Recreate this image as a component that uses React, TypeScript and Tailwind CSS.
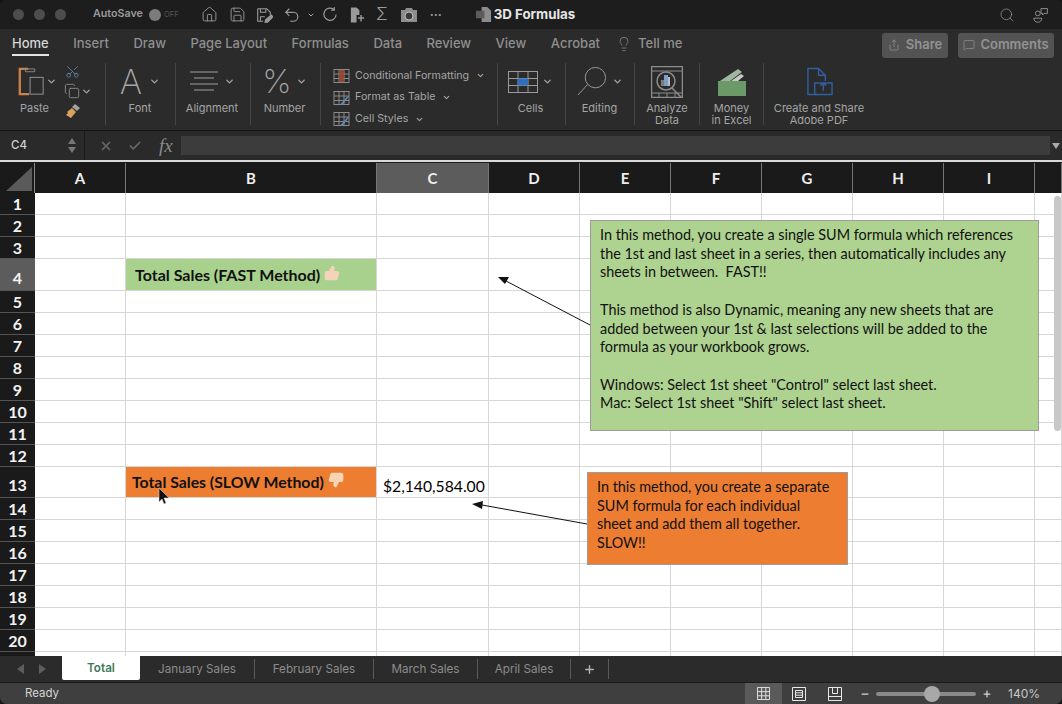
import { ThumbsUp, ThumbsDown, Home, Save, Search, Lightbulb, Plus, Minus, Share, MessageSquare, Check, X, ChevronDown, Scissors, Copy } from "lucide-react";

const ui = "font-['Inter',sans-serif]";
const sheet = "font-['Lato',sans-serif]";

const columns = ["A", "B", "C", "D", "E", "F", "G", "H", "I", ""];
const rows = Array.from({ length: 20 }, (_, i) => i + 1);
const tabs = [
  { name: "January Sales", w: "w-[115px]" },
  { name: "February Sales", w: "w-[119px]" },
  { name: "March Sales", w: "w-[104px]" },
  { name: "April Sales", w: "w-[93px]" },
];

function Chev({ className = "" }: { className?: string }) {
  return <ChevronDown className={`h-[11px] w-[11px] text-[#a5a5a5] ${className}`} strokeWidth={3} />;
}

function Sep() {
  return <div className="mb-[5px] mt-[2px] w-px shrink-0 bg-[#454545]" />;
}

function Group({ w, label, children }: { w: string; label: string; children?: React.ReactNode }) {
  return (
    <div className={`${w} flex shrink-0 flex-col items-center`}>
      <div className="flex h-[41px] items-center justify-center gap-[4px]">{children}</div>
      <div className="whitespace-pre-line text-center text-[11px] leading-[12px] text-[#a5a5a5]">{label}</div>
    </div>
  );
}

function TitleBar() {
  return (
    <div className={`flex h-[29px] items-center bg-[#1d1d1d] text-[#9a9a9a] ${ui}`}>
      <div className="ml-[13px] flex gap-[10px]">
        <div className="h-[11px] w-[11px] rounded-full bg-[#4d4d4d]" />
        <div className="h-[11px] w-[11px] rounded-full bg-[#4d4d4d]" />
        <div className="h-[11px] w-[11px] rounded-full bg-[#4d4d4d]" />
      </div>
      <span className="ml-[27px] w-[49px] whitespace-nowrap text-[10.700px] font-semibold">AutoSave</span>
      <div className="ml-[7px] h-[12px] w-[12px] rounded-full bg-[#7c7c7c]" />
      <span className="ml-[3px] w-[14px] text-[7.500px] text-[#555]">OFF</span>
      <Home className="ml-[23px] h-[17px] w-[17px]" strokeWidth={1.3} />
      <Save className="ml-[11px] h-[17px] w-[17px]" strokeWidth={1.3} />
      <svg viewBox="0 0 20 20" className="ml-[9px] h-[18px] w-[18px]" fill="none" stroke="currentColor" strokeWidth="1.2">
        <path d="M3 3h10l4 4v3M3 3v14h6M6 3v4h6V3M6 17v-5h5" />
        <path d="M11 18l1-3 6-5 2 2-6 6z" fill="currentColor" />
      </svg>
      <svg viewBox="0 0 18 18" className="ml-[11px] h-[18px] w-[16px]" fill="none" stroke="currentColor" strokeWidth="1.3">
        <path d="M6 2L2 6l4 4M2 6h8a5 5 0 0 1 1 10H7" />
      </svg>
      <Chev className="ml-[7px] !h-[8px] !w-[8px]" />
      <svg viewBox="0 0 18 18" className="ml-[7px] h-[17px] w-[17px]" fill="none" stroke="currentColor" strokeWidth="1.2">
        <path d="M15 9a6.500 6.500 0 1 1-2-5M13 1v3.500h-3.500" />
      </svg>
      <svg viewBox="0 0 18 18" className="ml-[10px] h-[18px] w-[17px]" fill="currentColor">
        <path d="M2 1h6l3 3v5H8v8H2z" />
        <path d="M12 9h1.500v2.500H16V13h-2.500v3H12v-3H9.500v-1.500H12z" />
      </svg>
      <span className="ml-[10px] text-[17px] font-light leading-none">Σ</span>
      <svg viewBox="0 0 18 16" className="ml-[12px] h-[16px] w-[18px]">
        <path d="M1 3h4l1-2h6l1 2h4v12H1z" fill="#8d8d8d" />
        <circle cx="9" cy="9" r="4" fill="#3a3a3a" stroke="#c0c0c0" />
      </svg>
      <span className="ml-[12px] w-[17px] text-[12px] font-bold leading-none">···</span>
      <svg viewBox="0 0 18 18" className="ml-[28px] h-[17px] w-[17px]">
        <path d="M7 1h6l4 4v12H7z" fill="#8c8c8c" />
        <rect x="1" y="5" width="9" height="8" fill="#5b5b5b" />
      </svg>
      <span className="ml-[2px] whitespace-nowrap text-[13.300px] font-bold text-[#e6e6e6]">3D Formulas</span>
      <Search className="ml-auto h-[16px] w-[16px]" strokeWidth={1.1} />
      <svg viewBox="0 0 20 20" className="ml-[18px] mr-[13px] h-[16px] w-[16px]" fill="none" stroke="currentColor" strokeWidth="1.1">
        <circle cx="6" cy="8" r="3" />
        <path d="M1 14h10c0 3-2 5-5 5s-5-2-5-5zM10 2h8v6h-4l-2 2V8h-2z" />
      </svg>
    </div>
  );
}

const ribbonTabs = ["Insert", "Draw", "Page Layout", "Formulas", "Data", "Review", "View", "Acrobat"];

function RibbonTabs() {
  return (
    <div className={`flex h-[29px] items-center bg-[#2b2b2b] pl-[12px] text-[13px] font-medium text-[#8f8f8f] ${ui}`}>
      <div className="relative text-[#d5d5d5]">
        Home
        <div className="absolute left-0 right-0 top-[20px] h-[2px] bg-[#e4e4e4]" />
      </div>
      {ribbonTabs.map((t) => (
        <span key={t} className="ml-[24.500px]">{t}</span>
      ))}
      <Lightbulb className="ml-[16px] h-[16px] w-[16px]" strokeWidth={1.1} />
      <span className="ml-[6px]">Tell me</span>
      <div className="ml-auto mt-[3px] flex h-[25px] w-[66px] items-center justify-center gap-[6px] rounded-[3px] bg-[#535353] font-semibold text-[#929292]">
        <Share className="h-[12px] w-[12px]" strokeWidth={1.4} />
        Share
      </div>
      <div className="ml-[10px] mr-[8px] mt-[3px] flex h-[25px] w-[96px] items-center justify-center gap-[5px] rounded-[3px] bg-[#535353] font-semibold text-[#929292]">
        <MessageSquare className="h-[12px] w-[12px]" strokeWidth={1.4} />
        Comments
      </div>
    </div>
  );
}

function StyleRow({ label, color }: { label: string; color: string }) {
  return (
    <div className="flex h-[22.500px] items-center gap-[5px] whitespace-nowrap text-[10.700px] text-[#a5a5a5]">
      <svg viewBox="0 0 16 16" className="h-[16px] w-[17px]" fill="none" stroke="#8a8a8a" strokeWidth="1">
        <rect x="0.500" y="1.500" width="15" height="13" />
        <path d="M0.500 6h15M0.500 10.500h15M5.500 1.500v13M10.500 1.500v13" />
        <path d={color === "#a0452d" ? "M6 2h4v12H6z" : "M7 14l7-8 1 1-6 8z"} fill={color} stroke="none" />
      </svg>
      {label}
      <Chev className="ml-[2px] !h-[9px] !w-[9px]" />
    </div>
  );
}

function Ribbon() {
  return (
    <div className={`flex h-[73px] border-b border-[#141414] bg-[#2b2b2b] pt-[3px] ${ui}`}>
      <div className="flex w-[105px] shrink-0 pl-[17px]">
        <div className="flex w-[42px] flex-col items-start">
          <div className="flex h-[41px] items-center gap-[1px]">
            <svg viewBox="0 0 30 34" className="h-[32px] w-[28px]" fill="none">
              <path d="M12 3H3v27h10" stroke="#c8824a" strokeWidth="2.500" />
              <path d="M9 3h10v3H9z" stroke="#8c8c8c" />
              <rect x="14" y="12" width="14" height="18" fill="#2b2b2b" stroke="#9a9a9a" />
            </svg>
            <Chev />
          </div>
          <div className="w-[35px] text-center text-[11px] leading-[12px] text-[#a5a5a5]">Paste</div>
        </div>
        <div className="flex flex-col items-start gap-[4px] pl-[5px] pt-[3px]">
          <Scissors className="ml-[1px] h-[15px] w-[15px] -rotate-90 text-[#6e8cb4]" strokeWidth={1.2} />
          <div className="flex items-center gap-[1px]">
            <Copy className="h-[16px] w-[16px] text-[#a0a0a0]" strokeWidth={1.1} />
            <Chev />
          </div>
          <svg viewBox="0 0 16 16" className="ml-[1px] h-[16px] w-[16px]">
            <path d="M10 1l5 4-3 3-5-4z" fill="#a0a0a0" />
            <path d="M7 5l4 4-5 6-5-3 2-2-1-1z" fill="#d9a15a" />
          </svg>
        </div>
      </div>
      <Sep />
      <Group w="w-[68px]" label="Font">
        <span className="text-[34px] font-extralight leading-none text-[#a5a5a5]">A</span>
        <Chev className="ml-[3px]" />
      </Group>
      <div className="w-px shrink-0" />
      <Sep />
      <Group w="w-[72px]" label="Alignment">
        <svg viewBox="0 0 28 24" className="h-[24px] w-[28px]" stroke="#a0a0a0" strokeWidth="1">
          <path d="M0 2h28M4 8h20M0 14h28M4 20h20" />
        </svg>
        <Chev className="ml-[2px]" />
      </Group>
      <div className="w-[2px] shrink-0" />
      <Sep />
      <Group w="w-[67px]" label="Number">
        <span className="text-[33px] font-extralight leading-none text-[#a5a5a5]">%</span>
        <Chev />
      </Group>
      <div className="w-[2px] shrink-0" />
      <Sep />
      <div className="flex w-[176px] shrink-0 flex-col pl-[12px] pt-[4px]">
        <StyleRow label="Conditional Formatting" color="#a0452d" />
        <StyleRow label="Format as Table" color="#5d86bd" />
        <StyleRow label="Cell Styles" color="#5d86bd" />
      </div>
      <Sep />
      <Group w="w-[65px]" label="Cells">
        <svg viewBox="0 0 30 26" className="h-[26px] w-[30px]" fill="none" stroke="#9a9a9a">
          <rect x="0.500" y="2.500" width="29" height="21" />
          <path d="M0.500 9.500h29M0.500 16.500h29M10 2.500v21M20 2.500v21" />
          <rect x="10" y="9.500" width="10" height="7" fill="#2e6fc0" stroke="none" />
        </svg>
        <Chev />
      </Group>
      <div className="w-[2px] shrink-0" />
      <Sep />
      <Group w="w-[67px]" label="Editing">
        <svg viewBox="0 0 32 32" className="h-[31px] w-[31px]" fill="none" stroke="#9a9a9a" strokeWidth="1">
          <circle cx="19" cy="12" r="10.500" />
          <path d="M11 19L1 30" />
        </svg>
        <Chev />
      </Group>
      <div className="w-px shrink-0" />
      <Sep />
      <Group w="w-[64px]" label={"Analyze\nData"}>
        <svg viewBox="0 0 32 32" className="h-[32px] w-[32px]" fill="none" stroke="#8d8d8d">
          <rect x="0.500" y="0.500" width="31" height="31" strokeWidth="1.500" />
          <path d="M0.500 5h31M0.500 27h31M8 27v4M16 27v4M24 27v4" />
          <circle cx="15" cy="15" r="9" strokeWidth="1.500" />
          <path d="M21 22l9 9" strokeWidth="1.500" />
          <rect x="10" y="14" width="3" height="6" fill="#7d7d7d" stroke="none" />
          <rect x="13" y="9" width="4" height="11" fill="#7d9dc9" stroke="none" />
          <rect x="17" y="11" width="2" height="9" fill="#bdbdbd" stroke="none" />
        </svg>
      </Group>
      <Sep />
      <Group w="w-[63px]" label={"Money\nin Excel"}>
        <svg viewBox="0 0 30 30" className="h-[30px] w-[30px]">
          <path d="M3 14l18-12 4 3-12 9z" fill="#9fb79f" />
          <path d="M14 14l10-7 3 2-6 5z" fill="#c9c9c9" />
          <rect x="1" y="14" width="28" height="15" fill="#6b9a68" />
        </svg>
      </Group>
      <Sep />
      <Group w="w-[110px]" label={"Create and Share\nAdobe PDF"}>
        <svg viewBox="0 0 28 30" className="h-[30px] w-[27px]" fill="none" stroke="#2f5f9e" strokeWidth="1.500">
          <path d="M12 28H2V1h11l7 7v6M13 1v7h7" />
          <path d="M9 16h18v12H9zM18 24v-8M15 19l3-3 3 3" />
        </svg>
      </Group>
    </div>
  );
}

function FormulaBar() {
  return (
    <div className={`flex h-[31px] items-center border-b-[2px] border-[#d9d9d9] bg-[#2a2a2a] ${ui}`}>
      <div className="flex h-full w-[85px] items-center justify-between border-r border-[#1b1b1b] pl-[11px] pr-[8px] text-[11.500px] font-medium text-[#d0d0d0]">
        C4
        <div className="flex flex-col gap-[3px]">
          <div className="h-0 w-0 border-x-[4px] border-b-[6px] border-x-transparent border-b-[#777]" />
          <div className="h-0 w-0 border-x-[4px] border-t-[6px] border-x-transparent border-t-[#777]" />
        </div>
      </div>
      <X className="ml-[14px] h-[14px] w-[14px] text-[#666]" strokeWidth={3} />
      <Check className="ml-[15px] h-[14px] w-[14px] text-[#666]" strokeWidth={3} />
      <span className="ml-[17px] w-[16px] font-['Liberation_Serif',serif] text-[19px] italic leading-none text-[#8a8a8a]">fx</span>
      <div className="ml-[6px] h-[19px] flex-1 bg-[#3c3c3c]" />
      <div className="mx-[2px] h-0 w-0 border-x-[4px] border-t-[6px] border-x-transparent border-t-[#aaa]" />
    </div>
  );
}

function Cell({ row, col }: { row: number; col: string }) {
  const green = row === 4 && col === "B";
  const orange = row === 13 && col === "B";
  return (
    <div
      className={`relative flex items-center border-b border-r border-[#d6d6d6] text-[16px] text-black ${green ? "bg-[#a9d18e]" : orange ? "bg-[#ed7d31]" : "bg-white"}`}
    >
      {green && (
        <span className="flex items-center whitespace-nowrap pl-[9px] font-bold text-[#111]">
          Total Sales (FAST Method)
          <ThumbsUp className="ml-[4px] h-[16px] w-[16px] -translate-y-[2px] fill-[#f4d3b8] text-[#f4d3b8]" />
        </span>
      )}
      {orange && (
        <span className="flex items-center whitespace-nowrap pl-[6px] text-[15.800px] font-bold text-[#111]">
          Total Sales (SLOW Method)
          <ThumbsDown className="ml-[4px] h-[16px] w-[16px] -translate-y-[2px] fill-[#f6d5b5] text-[#f6d5b5]" />
        </span>
      )}
      {row === 13 && col === "C" && <span className="whitespace-nowrap pl-[6px] pt-[9px] text-[15.700px]">$2,140,584.00</span>}
    </div>
  );
}

function Grid() {
  return (
    <div className={`relative h-[493px] overflow-hidden bg-white ${sheet}`}>
      <div className="grid grid-cols-[35px_91px_251px_112px_91px_91px_91px_91px_91px_91px_27px] grid-rows-[30px_repeat(3,22px)_32px_repeat(8,22px)_31px_repeat(7,22px)_4px]">
        <div className="flex items-end justify-end border-r border-[#888] bg-[#1a1a1a] p-[2px]">
          <div className="h-0 w-0 border-b-[24px] border-l-[26px] border-b-[#5a5a5a] border-l-transparent" />
        </div>
        {columns.map((c) => (
          <div
            key={c || "end"}
            className={`flex items-center justify-center border-r border-[#777] text-[15px] font-bold text-[#eee] ${c === "C" ? "bg-[#5c5c5c]" : "bg-[#1a1a1a]"}`}
          >
            {c}
          </div>
        ))}
        {rows.map((r) => (
          <div key={r} className="contents">
            <div
              className={`flex justify-center border-b border-[#555] text-[16px] font-bold text-[#f2f2f2] ${r === 4 ? "items-end bg-[#5c5c5c]" : r === 13 ? "items-end bg-[#1a1a1a]" : "items-center bg-[#1a1a1a]"}`}
            >
              {r}
            </div>
            {columns.map((c) => (
              <Cell key={c} row={r} col={c} />
            ))}
          </div>
        ))}
        <div className="bg-[#1a1a1a]" />
        {columns.map((c) => (
          <div key={c} className="border-r border-[#d6d6d6] bg-white" />
        ))}
      </div>

      {/* text boxes and arrows float over the sheet */}
      <div className="absolute left-[590px] top-[57px] h-[211px] w-[449px] whitespace-nowrap border border-[#9c9c9c] bg-[#aed28f] px-[9px] pt-[5px] text-[14.400px] leading-[18.700px] text-[#111]">
        In this method, you create a single SUM formula which references<br />
        the 1st and last sheet in a series, then automatically includes any<br />
        sheets in between.&nbsp; FAST!!<br />
        <br />
        This method is also Dynamic, meaning any new sheets that are<br />
        added between your 1st &amp; last selections will be added to the<br />
        formula as your workbook grows.<br />
        <br />
        Windows: Select 1st sheet "Control" select last sheet.<br />
        Mac: Select 1st sheet "Shift" select last sheet.
      </div>
      <div className="absolute left-[587px] top-[309px] h-[93px] w-[261px] whitespace-nowrap border border-[#9c9c9c] bg-[#ed7d31] px-[9px] pt-[5px] text-[14.400px] leading-[18.700px] text-[#111]">
        In this method, you create a separate<br />
        SUM formula for each individual<br />
        sheet and add them all together.<br />
        SLOW!!
      </div>
      <svg className="pointer-events-none absolute left-0 top-0 h-full w-full">
        <path d="M590 162L506 118M587 361L482 342" stroke="#111" strokeWidth="1" />
        <path d="M498 114l11 0-4 7zM472 341l11-3-1 8z" fill="#111" />
        <path d="M159 325l0 14 3-3 2 5 2-1-2-5h5z" fill="#111" stroke="#ddd" strokeWidth="0.500" />
      </svg>
      <div className="absolute right-[1px] top-[33px] h-[235px] w-[7px] rounded-full bg-[#c8c8c8]" />
    </div>
  );
}

function SheetTabs() {
  return (
    <div className={`flex h-[26px] items-center bg-[#2b2b2b] text-[11.700px] text-[#8c8c8c] ${ui}`}>
      <div className="flex w-[62px] justify-center gap-[15px]">
        <div className="h-0 w-0 border-y-[5px] border-r-[7px] border-y-transparent border-r-[#5d5d5d]" />
        <div className="h-0 w-0 border-y-[5px] border-l-[7px] border-y-transparent border-l-[#5d5d5d]" />
      </div>
      <div className="flex h-[24px] w-[78px] items-center justify-center self-start rounded-b-[2px] bg-white pt-[1px] font-semibold text-[#3d7a55]">
        Total
      </div>
      {tabs.map((t) => (
        <div key={t.name} className={`flex h-[20px] ${t.w} items-center justify-center whitespace-nowrap border-r border-[#5a5a5a] pt-[1px]`}>
          {t.name}
        </div>
      ))}
      <div className="flex h-[20px] w-[38px] items-center justify-center border-r border-[#5a5a5a]">
        <Plus className="h-[13px] w-[13px] text-[#b5b5b5]" strokeWidth={2.5} />
      </div>
    </div>
  );
}

function StatusBar() {
  return (
    <div className={`flex h-[22px] items-center border-t border-[#1a1a1a] bg-[#3f3f3f] text-[#d6d6d6] ${ui}`}>
      <span className="ml-[25px] pt-[1px] text-[11.500px]">Ready</span>
      <div className="ml-auto flex h-full w-[37px] items-center justify-center bg-[#5a5a5a]">
        <svg viewBox="0 0 14 14" className="h-[13px] w-[13px]" fill="none" stroke="#e8e8e8">
          <path d="M.5.5h13v13H.5zM.5 5h13M.5 9.500h13M5 .5v13M9.500 .5v13" />
        </svg>
      </div>
      <svg viewBox="0 0 14 14" className="ml-[10px] h-[14px] w-[14px]" fill="none" stroke="#e8e8e8">
        <path d="M.5.5h13v13H.5zM3.500 3.500h7v7h-7zM3.500 5.800h7M3.500 8.200h7" />
      </svg>
      <svg viewBox="0 0 14 14" className="ml-[22px] h-[14px] w-[14px]" fill="none" stroke="#e8e8e8">
        <path d="M.5.5h13v13H.5zM4.500.5v6h5v-6M.5 9.500h13" />
      </svg>
      <Minus className="ml-[18px] h-[10px] w-[10px]" strokeWidth={3} />
      <div className="relative ml-[6px] h-[4px] w-[100px] rounded-full bg-[#8a8a8a]">
        <div className="absolute left-[48px] top-[-6px] h-[16px] w-[16px] rounded-full bg-[#a8a8a8]" />
      </div>
      <Plus className="ml-[6px] h-[10px] w-[10px]" strokeWidth={3} />
      <span className="ml-[16px] mr-[22px] text-[12px] text-[#c8c8c8]">140%</span>
    </div>
  );
}

export default function App() {
  return (
    <div className="h-[704px] w-[1062px] bg-[#161616]">
      <div className="h-full overflow-hidden rounded-[7px] bg-[#2b2b2b]">
        <TitleBar />
        <RibbonTabs />
        <Ribbon />
        <FormulaBar />
        <div className="h-[1px] bg-[#1a1a1a]" />
        <Grid />
        <SheetTabs />
        <StatusBar />
      </div>
    </div>
  );
}
